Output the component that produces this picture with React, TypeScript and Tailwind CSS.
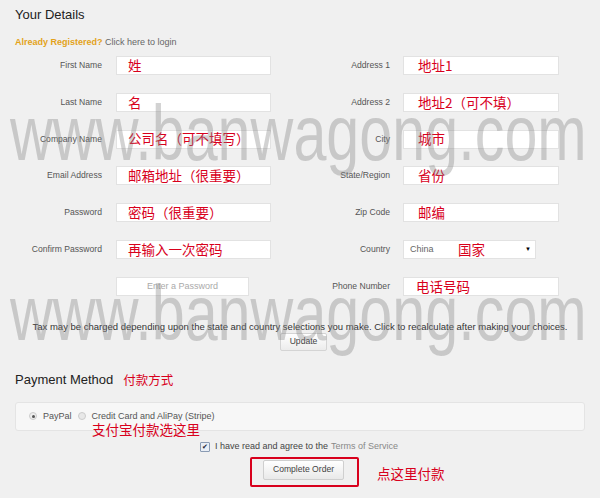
import React from "react";

const leftRows = [
  { label: "First Name", note: "姓" },
  { label: "Last Name", note: "名" },
  { label: "Company Name", note: "公司名（可不填写）" },
  { label: "Email Address", note: "邮箱地址（很重要）" },
  { label: "Password", note: "密码（很重要）" },
  { label: "Confirm Password", note: "再输入一次密码" },
];

const rightRows = [
  { label: "Address 1", note: "地址1" },
  { label: "Address 2", note: "地址2（可不填）" },
  { label: "City", note: "城市" },
  { label: "State/Region", note: "省份" },
  { label: "Zip Code", note: "邮编" },
];

function Note({ children }: { children: React.ReactNode }) {
  return (
    <span className="text-[13.5px] leading-none text-[#d8001c] font-['Noto_Sans_CJK_SC',sans-serif]">
      {children}
    </span>
  );
}

function Watermark({ top }: { top: string }) {
  return (
    <div
      className={`pointer-events-none absolute left-[10px] ${top} origin-left scale-x-[0.77] whitespace-nowrap text-[77px] leading-none text-[rgba(130,130,130,0.36)]`}
    >
      www.banwagong.com
    </div>
  );
}

export default function App() {
  return (
    <div className="relative w-[600px] h-[498px] overflow-hidden bg-[#f0f0f0] text-[#333] font-['Liberation_Sans',Arial,sans-serif]">
      <h2 className="pl-[15px] pt-[7px] text-[13px] leading-[16px] text-[#222]">Your Details</h2>
      <p className="mt-[13px] pl-[15px] text-[9px] leading-[12px]">
        <span className="font-bold text-[#e3a21a]">Already Registered?</span>{" "}
        <span className="text-[#666]">Click here to login</span>
      </p>

      {/* form columns */}
      <div className="mt-[8px] grid grid-cols-2">
        <div className="flex flex-col gap-[17.8px]">
          {leftRows.map((r) => (
            <div key={r.label} className="flex h-[19px] items-center">
              <label className="w-[102px] text-right text-[8.6px] text-[#555]">{r.label}</label>
              <div className="ml-[14px] flex h-[19px] w-[155px] items-center border border-[#e2e2e2] bg-white pl-[11px]">
                <Note>{r.note}</Note>
              </div>
            </div>
          ))}
          <div className="flex h-[19px] items-center">
            <div className="ml-[116px] flex h-[19px] w-[133px] items-center justify-center border border-[#e2e2e2] bg-white text-[9px] text-[#aaa]">
              Enter a Password
            </div>
          </div>
        </div>
        <div className="flex flex-col gap-[17.8px]">
          {rightRows.map((r) => (
            <div key={r.label} className="flex h-[19px] items-center">
              <label className="w-[90px] text-right text-[8.6px] text-[#555]">{r.label}</label>
              <div className="ml-[13px] flex h-[19px] w-[156px] items-center border border-[#e2e2e2] bg-white pl-[14px]">
                <Note>{r.note}</Note>
              </div>
            </div>
          ))}
          <div className="flex h-[19px] items-center">
            <label className="w-[90px] text-right text-[8.6px] text-[#555]">Country</label>
            <div className="ml-[13px] flex h-[19px] w-[133px] items-center border border-[#e2e2e2] bg-white pl-[6px] pr-[4px]">
              <span className="w-[48px] text-[9px] text-[#666]">China</span>
              <Note>国家</Note>
              <span className="ml-auto text-[6px] text-black">▼</span>
            </div>
          </div>
          <div className="flex h-[19px] items-center">
            <label className="w-[90px] text-right text-[8.6px] text-[#555]">Phone Number</label>
            <div className="ml-[13px] flex h-[19px] w-[156px] items-center border border-[#e2e2e2] bg-white pl-[12px]">
              <Note>电话号码</Note>
            </div>
          </div>
        </div>
      </div>

      <p className="mt-[25px] text-center text-[9.5px] leading-[12px] text-[#333]">
        Tax may be charged depending upon the state and country selections you make. Click to recalculate after making your choices.
      </p>
      <div className="flex justify-center pl-[7px]">
        <button className="h-[18px] w-[47px] rounded-[2px] border border-[#d4d4d4] bg-gradient-to-b from-white to-[#ececec] text-[8.6px] text-[#444]">
          Update
        </button>
      </div>

      <div className="mt-[21px] flex items-center pl-[15px]">
        <h2 className="text-[13px] leading-[16px] text-[#222]">Payment Method</h2>
        <span className="ml-[10px] text-[12.5px] leading-none text-[#d8001c] font-['Noto_Sans_CJK_SC',sans-serif]">付款方式</span>
      </div>

      <div className="relative mx-[15px] mt-[14px] flex h-[29px] items-center rounded-[3px] border border-[#e4e4e4] bg-[#f7f7f7] pl-[13px] text-[9px] text-[#555]">
        <span className="flex h-[8px] w-[8px] items-center justify-center rounded-full border border-[#ccc] bg-[#eee]">
          <span className="h-[3px] w-[3px] rounded-full bg-[#555]" />
        </span>
        <span className="ml-[6px]">PayPal</span>
        <span className="ml-[6px] h-[8px] w-[8px] rounded-full border border-[#ccc] bg-[#e8e8e8]" />
        <span className="ml-[6px]">Credit Card and AliPay (Stripe)</span>
        <span className="absolute left-[76px] top-[20px] text-[13.5px] leading-none text-[#d8001c] font-['Noto_Sans_CJK_SC',sans-serif]">
          支付宝付款选这里
        </span>
      </div>

      <div className="mt-[10px] flex h-[12px] items-center pl-[200px] text-[9px] text-[#444]">
        <span className="flex h-[10px] w-[10px] items-center justify-center rounded-[1px] border border-[#8a9bb3] bg-[#e9eef5] text-[7px] leading-none text-[#223]">
          ✔
        </span>
        <span className="ml-[5px]">I have read and agree to the</span>
        <span className="ml-[3px] text-[#888]">Terms of Service</span>
      </div>

      <div className="mt-[4px] flex items-center pl-[250px]">
        <div className="flex h-[30px] w-[109px] justify-center rounded-[2px] border-2 border-[#d8001c] pt-[1px] pr-[2px]">
          <button className="h-[20px] w-[81px] rounded-[2px] border border-[#cfcfcf] bg-gradient-to-b from-white to-[#e9e9e9] text-[8.6px] text-[#444]">
            Complete Order
          </button>
        </div>
        <span className="ml-[18px] mt-[3px] text-[13.5px] leading-none text-[#d8001c] font-['Noto_Sans_CJK_SC',sans-serif]">
          点这里付款
        </span>
      </div>

      <Watermark top="top-[95px]" />
      <Watermark top="top-[275px]" />
    </div>
  );
}
